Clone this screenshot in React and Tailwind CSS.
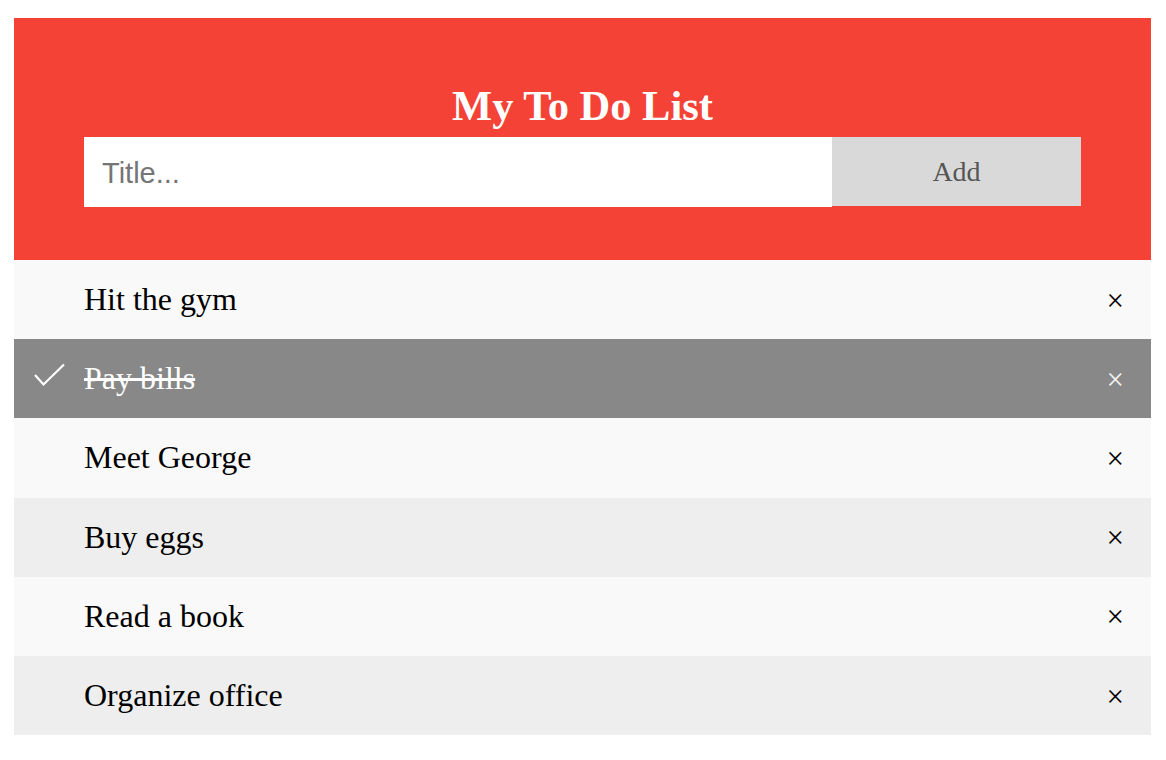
import React, { useState } from 'react';

const INITIAL = [
  { id: 1, title: 'Hit the gym', done: false },
  { id: 2, title: 'Pay bills', done: true },
  { id: 3, title: 'Meet George', done: false },
  { id: 4, title: 'Buy eggs', done: false },
  { id: 5, title: 'Read a book', done: false },
  { id: 6, title: 'Organize office', done: false },
];

const serif = { fontFamily: '"Liberation Serif", "Times New Roman", serif' };

export default function App() {
  const [items, setItems] = useState(INITIAL);
  const [text, setText] = useState('');

  const add = () => {
    if (!text.trim()) return;
    setItems([...items, { id: Date.now(), title: text, done: false }]);
    setText('');
  };

  const toggle = (id) =>
    setItems(items.map((it) => (it.id === id ? { ...it, done: !it.done } : it)));

  const remove = (id) => setItems(items.filter((it) => it.id !== id));

  return (
    <div className="min-h-[760px] bg-white pl-[14px] pr-[15px] pt-[18px]" style={serif}>
      <div className="bg-[#f44336] px-[70px] pt-[64px] pb-[53px] text-center">
        <h2 className="mb-[7px] h-[48px] text-[42.5px] font-bold leading-[48px] text-white">My To Do List</h2>
        <div className="flex">
          <input
            value={text}
            onChange={(e) => setText(e.target.value)}
            placeholder="Title..."
            className="h-[70px] w-[748px] bg-white px-[18px] pt-[2px] text-[29px] text-black outline-none placeholder:text-[#757575]"
            style={{ fontFamily: '"Liberation Sans", Arial, sans-serif' }}
          />
          <div
            onClick={add}
            className="flex h-[69px] flex-1 cursor-pointer items-center justify-center bg-[#d9d9d9] text-[28px] text-[#555]"
          >
            Add
          </div>
        </div>
      </div>

      <ul>
        {items.map((it, i) => (
          <li
            key={it.id}
            onClick={() => toggle(it.id)}
            className={`relative flex h-[79.2px] cursor-pointer items-center pl-[70px] text-[32px] ${
              it.done
                ? 'bg-[#888] text-white line-through'
                : i % 2 === 0
                ? 'bg-[#f9f9f9] text-black'
                : 'bg-[#eee] text-black'
            }`}
          >
            {it.done && (
              <svg className="absolute left-[19px] top-[24px]" width="33" height="25" viewBox="0 0 33 25" fill="none">
                <polyline points="2,12 10.5,21.5 31,1.5" stroke="white" strokeWidth="2.2" />
              </svg>
            )}
            <span className="leading-[37px]">{it.title}</span>
            <span
              onClick={(e) => {
                e.stopPropagation();
                remove(it.id);
              }}
              className={`absolute right-[27px] top-1/2 -translate-y-1/2 text-[31px] leading-none ${
                it.done ? 'text-[#f2f2f2]' : 'text-black'
              }`}
              style={{ textDecoration: 'none' }}
            >
              ×
            </span>
          </li>
        ))}
      </ul>
    </div>
  );
}
